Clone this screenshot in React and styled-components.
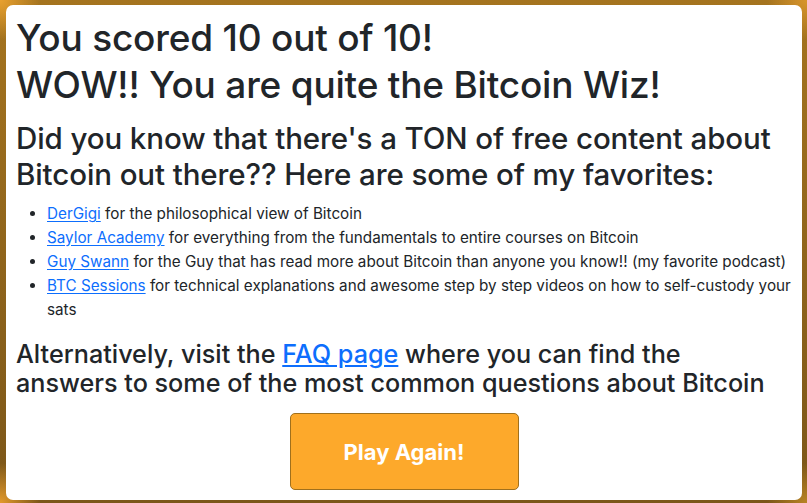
import React from "react";
import styled, { createGlobalStyle } from "styled-components";

const GlobalStyle = createGlobalStyle`
  html, body {
    margin: 0;
    padding: 0;
  }
  body {
    font-family: Inter, "Noto Sans", "Liberation Sans", sans-serif;
    color: #212529;
    background:
      radial-gradient(circle at 0 0, #e9a12f 0, rgba(233,161,47,0) 40px),
      radial-gradient(circle at 100% 0, #d8952c 0, rgba(216,149,44,0) 40px),
      radial-gradient(circle at 0 100%, #e39a2c 0, rgba(227,154,44,0) 40px),
      radial-gradient(circle at 100% 100%, #b98424 0, rgba(185,132,36,0) 40px),
      linear-gradient(to bottom, #a5741f, #7b5619);
    height: 503px;
    overflow: hidden;
  }
`;

const Page = styled.div`
  padding: 5px 5px 3px 6px;
`;

const Card = styled.div`
  background: #fff;
  border-radius: 7px;
  height: 495px;
  box-sizing: border-box;
  padding: 9px 10px 10px;
  display: flex;
  flex-direction: column;
`;

const Title = styled.h1`
  margin: 0;
  font-size: 37px;
  font-weight: 500;
  line-height: 47px;
  letter-spacing: -0.2px;
`;

const SubTitle = styled.h2`
  margin: 12px 0 0;
  font-size: 29.5px;
  font-weight: 500;
  line-height: 36px;
  letter-spacing: -0.1px;
`;

const List = styled.ul`
  margin: 10px 0 0;
  padding-left: 31px;
  font-size: 15.25px;
  line-height: 24px;
  list-style: disc;
`;

const Item = styled.li`
  padding-left: 0;
`;

const Link = styled.a`
  color: #0d6efd;
  text-decoration: underline;
  text-underline-offset: 2px;
`;

const Note = styled.h3`
  margin: 18px 0 0;
  max-width: 750px;
  font-size: 25.2px;
  font-weight: 500;
  line-height: 29px;
`;

const ButtonRow = styled.div`
  display: flex;
  justify-content: center;
  margin-top: 15px;
`;

const PlayButton = styled.button`
  width: 229px;
  height: 77px;
  background: #fda92b;
  border: 1px solid #a0701c;
  border-radius: 5px;
  color: #fff;
  font-family: Inter, "Noto Sans", "Liberation Sans", sans-serif;
  font-size: 22px;
  font-weight: 700;
  cursor: pointer;
`;

const links = [
  ["DerGigi", "for the philosophical view of Bitcoin"],
  ["Saylor Academy", "for everything from the fundamentals to entire courses on Bitcoin"],
  ["Guy Swann", "for the Guy that has read more about Bitcoin than anyone you know!! (my favorite podcast)"],
  ["BTC Sessions", "for technical explanations and awesome step by step videos on how to self-custody your sats"],
];

export default function App() {
  return (
    <>
      <GlobalStyle />
      <Page>
        <Card>
          <Title>
            You scored 10 out of 10!
            <br />
            WOW!! You are quite the Bitcoin Wiz!
          </Title>
          <SubTitle>
            Did you know that there's a TON of free content about Bitcoin out there?? Here are some of my favorites:
          </SubTitle>
          <List>
            {links.map(([name, text]) => (
              <Item key={name}>
                <Link href="#">{name}</Link> {text}
              </Item>
            ))}
          </List>
          <Note>
            Alternatively, visit the <Link href="#">FAQ page</Link> where you can find the answers to some of the most common questions about Bitcoin
          </Note>
          <ButtonRow>
            <PlayButton>Play Again!</PlayButton>
          </ButtonRow>
        </Card>
      </Page>
    </>
  );
}
